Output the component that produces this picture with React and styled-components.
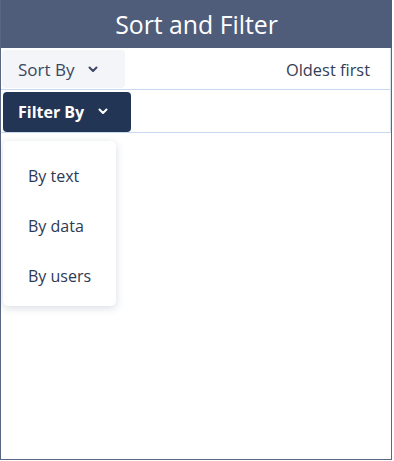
import React from "react";
import styled, { createGlobalStyle } from "styled-components";

const Global = createGlobalStyle`
  html, body { margin: 0; padding: 0; background: #ffffff; }
  body { font-family: "Open Sans", "Noto Sans", sans-serif; }
`;

const Frame = styled.div`
  box-sizing: border-box;
  width: 392px;
  height: 460px;
  border: 1px solid #5a6682;
  border-top: none;
  display: flex;
  flex-direction: column;
  background: #fff;
`;

const Header = styled.div`
  height: 48px;
  background: #4f5d7b;
  color: #fff;
  display: flex;
  align-items: center;
  justify-content: center;
  font-size: 24.8px;
  font-family: "Open Sans", sans-serif;
  padding-bottom: 1px;
  box-sizing: border-box;
  margin-right: -1px;
`;

const Row = styled.div`
  position: relative;
  box-sizing: border-box;
  height: ${(p) => p.$h}px;
  border-bottom: 1px solid #c8d8ee;
  border-right: 1px solid #d6e2f2;
  display: flex;
  align-items: center;
  justify-content: space-between;
  padding: 1px 20px 0 1px;
`;

const DropButton = styled.button`
  box-sizing: border-box;
  height: ${(p) => p.$h}px;
  width: ${(p) => p.$w}px;
  margin-left: ${(p) => (p.$dark ? 1 : 0)}px;
  border: none;
  border-radius: 4px;
  background: ${(p) => (p.$dark ? "#233554" : "#f3f5f8")};
  color: ${(p) => (p.$dark ? "#fff" : "#3b4762")};
  font-family: "Open Sans", sans-serif;
  font-size: ${(p) => (p.$dark ? 16 : 17)}px;
  font-weight: ${(p) => (p.$dark ? 700 : 500)};
  display: flex;
  align-items: center;
  gap: 14px;
  padding: 0 0 0 ${(p) => (p.$dark ? 15 : 16)}px;
  cursor: pointer;
`;

const Value = styled.span`
  font-size: 16.4px;
  color: #334057;
`;

const Menu = styled.div`
  position: absolute;
  top: 51px;
  left: 2px;
  width: 113px;
  height: 165px;
  box-sizing: border-box;
  background: #fff;
  border-radius: 5px;
  box-shadow: 0 2px 8px rgba(40, 55, 90, 0.18);
  display: flex;
  flex-direction: column;
  padding-top: 24px;
  z-index: 2;
`;

const MenuItem = styled.div`
  flex: 0 0 50px;
  display: flex;
  align-items: flex-start;
  padding-left: 25px;
  font-size: 16px;
  color: #2c3a55;
`;

const Chevron = () => (
  <svg width="10" height="7" viewBox="0 0 10 7">
    <path d="M1.5 1.5 L5 5 L8.5 1.5" fill="none" stroke="currentColor" strokeWidth="2" strokeLinecap="round" strokeLinejoin="round" />
  </svg>
);

export default function App() {
  return (
    <>
      <Global />
      <Frame>
        <Header>Sort and Filter</Header>
        <Row $h={42}>
          <DropButton $w={123} $h={38}>
            Sort By <Chevron />
          </DropButton>
          <Value>Oldest first</Value>
        </Row>
        <Row $h={43}>
          <DropButton $dark $w={128} $h={40}>
            Filter By <Chevron />
          </DropButton>
          <Menu>
            <MenuItem>By text</MenuItem>
            <MenuItem>By data</MenuItem>
            <MenuItem>By users</MenuItem>
          </Menu>
        </Row>
      </Frame>
    </>
  );
}
